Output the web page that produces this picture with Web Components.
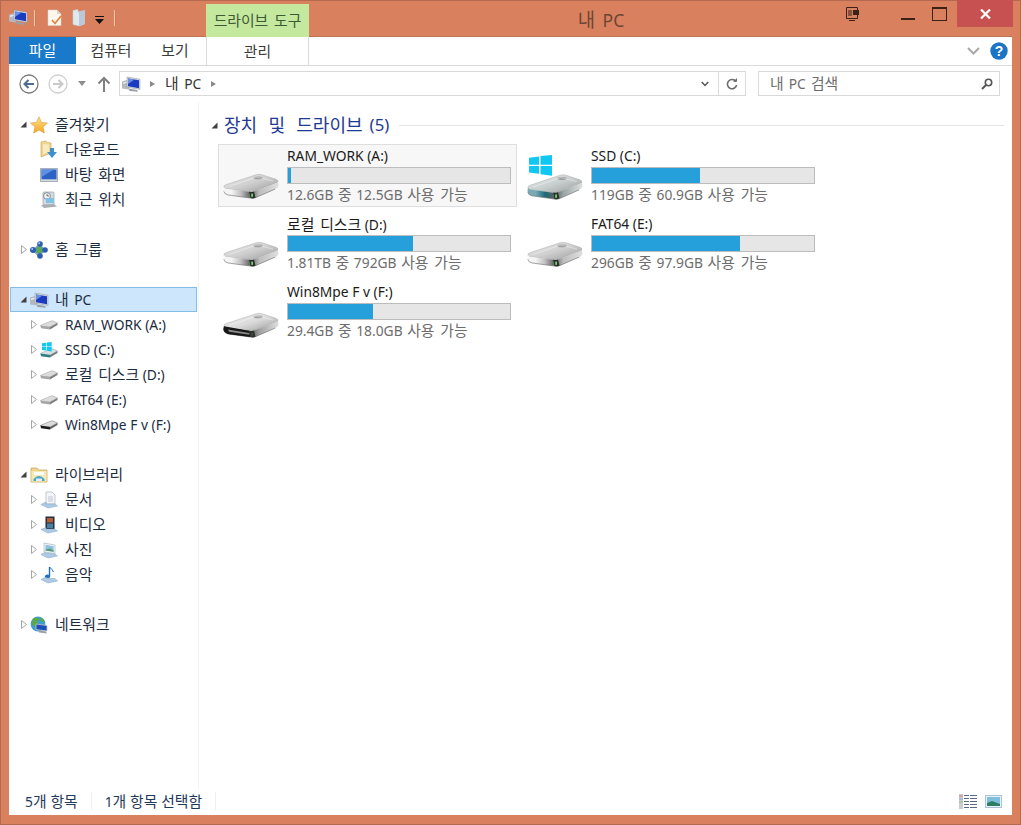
<!DOCTYPE html>
<html lang="ko"><head><meta charset="utf-8"><title>내 PC</title>
<style>
html,body{margin:0;padding:0;background:#d9815f}
body{font:13.8px "Noto Sans","Noto Sans CJK KR",sans-serif;color:#1e395b}
</style></head><body>
<x-window>
  <x-titlebar slot="title"></x-titlebar>
  <x-ribbon slot="ribbon"></x-ribbon>
  <x-addressbar slot="address"></x-addressbar>
  <x-nav slot="nav">
    <x-nav-item level="0" arrow="open" icon="star">즐겨찾기</x-nav-item>
    <x-nav-item level="1" icon="download">다운로드</x-nav-item>
    <x-nav-item level="1" icon="desktop">바탕 화면</x-nav-item>
    <x-nav-item level="1" icon="recent">최근 위치</x-nav-item>
    <x-nav-item spacer></x-nav-item>
    <x-nav-item level="0" arrow="closed" icon="homegroup">홈 그룹</x-nav-item>
    <x-nav-item spacer></x-nav-item>
    <x-nav-item level="0" arrow="open" icon="pc" selected>내 PC</x-nav-item>
    <x-nav-item level="1" arrow="closed" icon="drive-s">RAM_WORK (A:)</x-nav-item>
    <x-nav-item level="1" arrow="closed" icon="ssd-s">SSD (C:)</x-nav-item>
    <x-nav-item level="1" arrow="closed" icon="drive-s">로컬 디스크 (D:)</x-nav-item>
    <x-nav-item level="1" arrow="closed" icon="drive-s">FAT64 (E:)</x-nav-item>
    <x-nav-item level="1" arrow="closed" icon="usb-s">Win8Mpe F v (F:)</x-nav-item>
    <x-nav-item spacer></x-nav-item>
    <x-nav-item level="0" arrow="open" icon="library">라이브러리</x-nav-item>
    <x-nav-item level="1" arrow="closed" icon="doc">문서</x-nav-item>
    <x-nav-item level="1" arrow="closed" icon="video">비디오</x-nav-item>
    <x-nav-item level="1" arrow="closed" icon="picture">사진</x-nav-item>
    <x-nav-item level="1" arrow="closed" icon="music">음악</x-nav-item>
    <x-nav-item spacer></x-nav-item>
    <x-nav-item level="0" arrow="closed" icon="globe">네트워크</x-nav-item>
  </x-nav>
  <x-content slot="content">
    <x-group-header count="(5)">장치 및 드라이브</x-group-header>
    <x-drive-grid>
      <x-drive-tile selected icon="drive" name="RAM_WORK (A:)" fill="3" info="12.6GB 중 12.5GB 사용 가능"></x-drive-tile>
      <x-drive-tile icon="ssd" name="SSD (C:)" fill="108" info="119GB 중 60.9GB 사용 가능"></x-drive-tile>
      <x-drive-tile icon="drive" name="로컬 디스크 (D:)" fill="125" info="1.81TB 중 792GB 사용 가능"></x-drive-tile>
      <x-drive-tile icon="drive" name="FAT64 (E:)" fill="148" info="296GB 중 97.9GB 사용 가능"></x-drive-tile>
      <x-drive-tile icon="usb" name="Win8Mpe F v (F:)" fill="85" info="29.4GB 중 18.0GB 사용 가능"></x-drive-tile>
    </x-drive-grid>
  </x-content>
  <x-statusbar slot="status"></x-statusbar>
</x-window>
<script>
const driveBody=(lite,front,right,top,led)=>`
 <defs>
  <linearGradient id="dt" x1="0" y1="0" x2="1" y2="1"><stop offset="0" stop-color="#ececec"/><stop offset=".5" stop-color="${top}"/><stop offset="1" stop-color="#999"/></linearGradient>
  <linearGradient id="df" x1="0" y1="0" x2="1" y2="0"><stop offset="0" stop-color="${lite}"/><stop offset=".3" stop-color="${lite}"/><stop offset=".65" stop-color="${front}"/><stop offset="1" stop-color="#5f5f5f"/></linearGradient>
  <linearGradient id="dr" x1="0" y1="0" x2="1" y2="0"><stop offset="0" stop-color="#4f4f4f"/><stop offset=".35" stop-color="${right}"/><stop offset="1" stop-color="#e0e0e0"/></linearGradient>
 </defs>
 <path d="M1 15.5 Q0.5 14 3 13 L33 2 Q36 1 39 2 L53 7 Q56 8.5 54.5 10.5 L31 20.5 Q29 21.5 26 21 L3 17.5 Q1.5 17 1 15.5Z" fill="url(#dt)" stroke="#a8a8a8" stroke-width=".5"/>
 <path d="M1 15.5 Q1.5 17 3 17.5 L26 21 L27.5 28 L5 24.5 Q0.5 23 0.5 19Z" fill="url(#df)"/>
 <path d="M31 20.5 L54.5 10.5 Q56 12 55.5 14.5 Q55 16.5 52 18 L32.5 27.5 Q30 28.5 27.5 28 L26 21 Q29 21.5 31 20.5Z" fill="url(#dr)"/>
 <path d="M.8 20.5 Q1.5 23.8 5 24.5 L27.5 28 Q30 28.5 32.5 27.5 L52 18" fill="none" stroke="#6a6a6a" stroke-width=".8" opacity=".8"/>
 <path d="M26 21 Q29 21.5 31 20.5 L32.5 27.5 Q30 28.5 27.5 28Z" fill="#2c3129"/>
 <rect x="28.2" y="23" width="1.8" height="3.6" fill="${led}"/>
 <ellipse cx="35" cy="5.5" rx="4.5" ry="1.6" fill="#8c8c8c" opacity=".75"/>
 <path d="M6 15 L34 4.5 L50 9" fill="none" stroke="#fff" stroke-width=".8" opacity=".5"/>`;
const win=(x,y,s)=>`<g transform="translate(${x} ${y}) scale(${s})" fill="#12c7f4">
 <path d="M0 3 L10 1.5 V10.5 H0Z"/><path d="M11.5 1.2 L23 0 V10.5 H11.5Z"/><path d="M0 12 H10 V20.5 L0 19Z"/><path d="M11.5 12 H23 V22.5 L11.5 21Z"/></g>`;
const pc=`<path d="M0 5.5 L7 3.5 V13.5 L0 12.5Z" fill="#b4b9c0"/><path d="M1 6.5 L5 5.5 V7 L1 8Z" fill="#e6e8eb"/><path d="M5 1 L18 3.2 V13.4 L5 11.2Z" fill="#d6dade" stroke="#8d959f" stroke-width=".5"/><path d="M6 2.4 L17 4.2 V12.2 L6 10.2Z" fill="#1a3cc2"/><path d="M6 2.4 L12.5 3.5 L6 8Z" fill="#6a90e4"/><path d="M6.5 12.6 L15 14 L16 15.8 L7.5 15Z" fill="#9aa0a6"/>`;
const ICONS={
 drive:{vb:"0 0 56 29",w:56,h:26,s:driveBody("#f4f4f4","#bfbfbf","#bdbdbd","#cfcfcf","#6fd06f")},
 ssd:{vb:"0 0 56 49",w:56,h:45,s:`<g transform="translate(0 20)">${driveBody("#79aab3","#1c6a7a","#9aa5a6","#c8cfcf","#6fd06f")}</g>`+win(2,0,1)},
 usb:{vb:"0 0 56 29",w:56,h:26,s:driveBody("#333","#1c1c1c","#a0a0a0","#dcdcdc","#444")+`<path d="M1 16 L26 21 L27.5 28 L5 24.5 Q0.5 23 0.5 19Z" fill="#171717"/><path d="M5 19.5 L26 23.4 L26.4 25.4 L6 22Z" fill="#8a8a8a"/>`},
 "drive-s":{vb:"0 0 18 10",w:18,h:10,s:`<path d="M.5 5.4 L11 1 Q12 .7 13 1 L17.5 3 L10 7 L1 6.4Z" fill="#dcdcdc" stroke="#9a9a9a" stroke-width=".5"/><path d="M.5 5.4 L10 7 V9.5 L1 8.2Z" fill="#a6a6a6"/><path d="M10 7 L17.5 3 V5 L10 9.5Z" fill="#7f7f7f"/>`},
 "ssd-s":{vb:"0 0 18 16",w:18,h:16,s:`<g transform="translate(0 6)"><path d="M.5 5.4 L11 1 Q12 .7 13 1 L17.5 3 L10 7 L1 6.4Z" fill="#d9dede" stroke="#8a9a9a" stroke-width=".5"/><path d="M.5 5.4 L10 7 V9.5 L1 8.2Z" fill="#2d7d88"/><path d="M10 7 L17.5 3 V5 L10 9.5Z" fill="#6f8080"/></g>`+win(2,0,.42)},
 "usb-s":{vb:"0 0 18 10",w:18,h:10,s:`<path d="M.5 5.4 L11 1 Q12 .7 13 1 L17.5 3 L10 7 L1 6.4Z" fill="#dcdcdc" stroke="#777" stroke-width=".5"/><path d="M.5 5.4 L10 7 V9.5 L1 8.2Z" fill="#1b1b1b"/><path d="M10 7 L17.5 3 V5 L10 9.5Z" fill="#666"/>`},
 pc:{vb:"0 0 18 16",w:18,h:16,s:pc},
 star:{vb:"0 0 18 18",w:18,h:18,s:`<defs><linearGradient id="g" x1="0" y1="0" x2="0" y2="1"><stop offset="0" stop-color="#ffe18a"/><stop offset="1" stop-color="#f5a623"/></linearGradient></defs><path d="M9 .8 L11.5 6.4 L17.5 7 L13 11 L14.4 17 L9 14 L3.6 17 L5 11 L.5 7 L6.5 6.4Z" fill="url(#g)" stroke="#d59a3b" stroke-width=".6"/>`},
 download:{vb:"0 0 18 18",w:18,h:18,s:`<path d="M1 1 L6 0 Q6.5 2 11 2 V12 L1 16Z" fill="#f0d68a" stroke="#c3a257" stroke-width=".6"/><path d="M3 3 V13 L9 11 V3.5Z" fill="#f8ebc0"/><path d="M10 7 H14 V11 H17 L12 17 L7 11 H10Z" fill="#3d8fcf"/>`},
 desktop:{vb:"0 0 18 14",w:18,h:14,s:`<rect x=".5" y=".5" width="17" height="13" fill="#d2d8e0" stroke="#a8b1bd"/><rect x="1.5" y="1.5" width="15" height="9.8" fill="#2c62c4"/><path d="M1.5 1.5 H14 L1.5 9Z" fill="#5f8fe0"/>`},
 recent:{vb:"0 0 18 18",w:18,h:18,s:`<rect x="3" y="1" width="11" height="13" rx="1" fill="#d5dbe0" stroke="#8f979f" stroke-width=".6"/><circle cx="7" cy="5" r="3.4" fill="#f2f5f7" stroke="#6d7780" stroke-width=".8"/><path d="M7 3 V5 H9" fill="none" stroke="#444" stroke-width=".7"/><rect x="6" y="7" width="8" height="5" fill="#7ec3e6"/><path d="M1 14 L14 13 L17 15.5 L4 17Z" fill="#a8aeb3"/>`},
 homegroup:{vb:"0 0 18 18",w:18,h:18,s:`<circle cx="9" cy="9" r="4" fill="#59a85b"/><path d="M9 3 L3 10 L9 15 L15 9Z" fill="none" stroke="#7ca0c7" stroke-width="1.2"/><circle cx="10" cy="3" r="2.8" fill="#2b5fae"/><circle cx="3" cy="9" r="3" fill="#2b5fae"/><circle cx="15" cy="9" r="2.8" fill="#2b5fae"/><circle cx="10" cy="15" r="2.8" fill="#2b5fae"/><circle cx="9.2" cy="2.2" r="1" fill="#a8c8f0"/><circle cx="2.2" cy="8" r="1" fill="#a8c8f0"/>`},
 library:{vb:"0 0 18 18",w:18,h:18,s:`<path d="M1 4 V2 H7 L8.5 4 H17 V16 H1Z" fill="#f0d68a" stroke="#c3a257" stroke-width=".7"/><rect x="1.5" y="5" width="15" height="10.5" fill="#f8e9b4"/><rect x="4" y="6" width="10" height="3" fill="#fff"/><path d="M3.5 13 Q9 7 14.5 13 V15 H3.5Z" fill="#4aa7c9"/><rect x="6" y="12.5" width="6" height="2.5" fill="#e4eef4"/>`},
 doc:{vb:"0 0 18 18",w:18,h:18,s:`<path d="M6 1 H12 L15 4 V13 H6Z" fill="#f4f6f9" stroke="#a9b4c2" stroke-width=".7"/><path d="M8 6 H13 M8 8 H13 M8 10 H13" stroke="#aab6c6" stroke-width=".7"/><path d="M1 13.5 L6 11 V13 H15 L17.5 15 L8 17 Z" fill="#aecbe6" stroke="#7ba2c9" stroke-width=".5"/>`},
 video:{vb:"0 0 18 18",w:18,h:18,s:`<rect x="5.5" y="0.5" width="9" height="13" fill="#233242"/><rect x="7" y="2" width="6" height="4.5" fill="#b85c33"/><rect x="7" y="7.5" width="6" height="4.5" fill="#4a7fa0"/><path d="M5.5 1 V13 M14.5 1 V13" stroke="#889" stroke-dasharray="1 1"/><path d="M1 13.5 L6 11.5 V13 H14.5 L17.5 15 L8 17Z" fill="#aecbe6" stroke="#7ba2c9" stroke-width=".5"/>`},
 picture:{vb:"0 0 18 18",w:18,h:18,s:`<path d="M4 2 L15 4 V12.5 L4 11Z" fill="#eef3f7" stroke="#9fb0c0" stroke-width=".6"/><path d="M5.5 3.8 L13.6 5.2 V10.8 L5.5 9.6Z" fill="#8fc1de"/><path d="M5.5 8.5 L10 7.5 L13.6 9.5 V10.8 L5.5 9.6Z" fill="#5a9a6d"/><path d="M1 13.5 L5 11.5 V12 L15 13 L17.5 15 L8 17Z" fill="#aecbe6" stroke="#7ba2c9" stroke-width=".5"/>`},
 music:{vb:"0 0 18 18",w:18,h:18,s:`<path d="M9.5 1 V10" stroke="#1c6fc0" stroke-width="1.4" fill="none"/><path d="M9.5 1 Q12 3 13.5 6" stroke="#1c6fc0" stroke-width="1" fill="none"/><ellipse cx="7.5" cy="10.5" rx="2.6" ry="2" fill="#1c6fc0"/><path d="M1 13.5 L5 11.5 L10 12.5 H15 L17.5 15 L8 17Z" fill="#aecbe6" stroke="#7ba2c9" stroke-width=".5"/>`},
 globe:{vb:"0 0 18 18",w:18,h:18,s:`<circle cx="8" cy="8" r="7.4" fill="#3f9ecb"/><path d="M3 2.5 Q7 1 9 3 L7 6 L8 9 L5 11 L2 8Z M10 1.5 Q14 2.5 15 6 L11 5Z" fill="#5da83f"/><path d="M6 8 L17 9.5 V15 L6 13.5Z" fill="#1c4db8" stroke="#c2c8d0" stroke-width=".8"/><path d="M8 14 L16 15.5 L17 17.5 L9 16.5Z" fill="#9aa1a8"/>`},
 doccheck:{vb:"0 0 16 18",w:16,h:18,s:`<path d="M1 1 H10 L14 5 V16.5 H1Z" fill="#fbf7ef" stroke="#d9d2c4" stroke-width=".5"/><path d="M10 1 V5 H14Z" fill="#dcd6c8"/><path d="M5 11 L8 14.5 L14 7" fill="none" stroke="#e2853c" stroke-width="1.7"/>`},
 folderq:{vb:"0 0 14 18",w:14,h:18,s:`<path d="M1 1.5 L6 .5 V3 L12.5 1.5 V15 L7 17 L1 15.5Z" fill="#dfe7ef" stroke="#c4cfdb" stroke-width=".5"/><path d="M7 3 L12.5 1.5 V15 L7 17Z" fill="#b9c9da"/>`}
};
class XIcon extends HTMLElement{
 static get observedAttributes(){return["name"]}
 constructor(){super();this.attachShadow({mode:"open"})}
 connectedCallback(){this.render()}
 attributeChangedCallback(){this.render()}
 render(){const i=ICONS[this.getAttribute("name")];if(!i)return;
  this.shadowRoot.innerHTML=`<style>:host{display:inline-flex;flex:none;line-height:0}svg{display:block;overflow:visible}</style><svg xmlns="http://www.w3.org/2000/svg" width="${i.w}" height="${i.h}" viewBox="${i.vb}" preserveAspectRatio="none">${i.s}</svg>`;}
}
customElements.define("x-icon",XIcon);

function tpl(html){const t=document.createElement("template");t.innerHTML=html;return t}
function comp(name,html,extra){
 const t=tpl(html);
 customElements.define(name,class extends HTMLElement{
  constructor(){super();this.attachShadow({mode:"open"}).appendChild(t.content.cloneNode(true))}
  connectedCallback(){extra&&extra.call(this,this.shadowRoot)}
 });
}
comp("x-window",`<style>
:host{display:flex;flex-direction:column;box-sizing:border-box;width:1021px;height:825px;border:1px solid #b56a50;background:#d9815f}
.main{flex:1;display:flex;flex-direction:column;margin:0 8px 9px 8px;background:#fff;min-height:0;box-shadow:0 -1px 0 #bd7156}
.body{flex:1;display:flex;min-height:0}
</style>
<slot name="title"></slot>
<div class="main"><slot name="ribbon"></slot><slot name="address"></slot>
<div class="body"><slot name="nav"></slot><slot name="content"></slot></div>
<slot name="status"></slot></div>`);

comp("x-titlebar",`<style>
:host{display:flex;height:36px;flex:none;position:relative}
.qa{display:flex;align-items:flex-start;width:205px;padding:8px 0 0 8px;box-sizing:border-box;flex:none}
.sep{width:1px;height:16px;background:#f3c9a9;box-shadow:1px 0 0 #c9785a;margin-top:1px}
.ctx{flex:none;width:103px;height:33px;margin-top:3px;background:#c4e89e;color:#3d5a35;box-sizing:border-box;padding-top:7px;text-align:center;line-height:18px}
.title{flex:none;width:584px;text-align:center;padding-top:9px;font-size:17.5px;line-height:20px;color:#6e4535;--hws:4px;word-spacing:3px}
.ctrl{flex:1;display:flex;position:relative;margin-left:-92px}
.snap{position:absolute;left:45px;top:6px}
.min{position:absolute;left:100px;top:17px;width:14px;height:2px;background:#3a2218}
.max{position:absolute;left:131px;top:6px;width:13px;height:11px;border:1px solid #3a2218;border-top-width:2px}
.close{position:absolute;left:156px;top:-1px;width:56px;height:27px;background:#c75050;color:#fff;display:flex;align-items:center;justify-content:center}
.caret{margin:7px 0 0 9px}
</style>
<div class="qa">
 <x-icon name="pc"></x-icon><span class="sep" style="margin-left:7px;margin-right:12px"></span>
 <x-icon name="doccheck"></x-icon><x-icon name="folderq" style="margin-left:9px"></x-icon>
 <svg class="caret" width="9" height="9" viewBox="0 0 9 9"><path d="M0 0H9V1H0Z M0 3H9L4.5 8Z" fill="#111"/></svg>
 <span class="sep" style="margin-left:10px"></span>
</div>
<div class="ctx">드라이브 도구</div>
<div class="title">내 PC</div>
<div class="ctrl">
 <svg class="snap" width="13" height="14" viewBox="0 0 13 14"><path d="M.5.5H11.5V11.5H.5Z M3.5 11.5H8.5M3 13.5H9" fill="none" stroke="#3a2218"/><path d="M3 3V9M5 3V9" stroke="#3a2218"/><rect x="7" y="3" width="6" height="5" fill="#3a2218"/></svg>
 <span class="min"></span><span class="max"></span>
 <span class="close"><svg width="11" height="10" viewBox="0 0 11 10"><path d="M1 .5L10 9.5M10 .5L1 9.5" stroke="#fff" stroke-width="2.2"/></svg></span>
</div>`);

comp("x-ribbon",`<style>
:host{display:flex;height:29px;flex:none;box-sizing:border-box;border-bottom:1px solid #dadbdc;color:#3b3b3b;align-items:stretch}
.tab{display:flex;align-items:center;justify-content:center;box-sizing:border-box;height:27px;line-height:1}
.file{width:67px;background:#1979ca;color:#fff}
.mgr{width:103px;height:28px;border:solid #dadbdc;border-width:0 1px;margin-left:2px}
.end{margin-left:auto;display:flex;align-items:center;gap:10px;padding-right:4px}
</style>
<span class="tab file">파일</span><span class="tab" style="width:70px">컴퓨터</span><span class="tab" style="width:58px">보기</span><span class="tab mgr">관리</span>
<span class="end"><svg width="13" height="8" viewBox="0 0 13 8"><path d="M1 1L6.5 6.5L12 1" fill="none" stroke="#a9a9a9" stroke-width="2"/></svg>
<svg width="18" height="18" viewBox="0 0 18 18"><circle cx="9" cy="9" r="8.7" fill="#1b75c4"/><text x="9" y="14.2" text-anchor="middle" font-family="Liberation Sans" font-weight="700" font-size="14" fill="#fff">?</text></svg></span>`);

comp("x-addressbar",`<style>
:host{display:flex;height:36px;flex:none;box-sizing:border-box;padding:5px 12px 6px 10px;color:#333;align-items:stretch}
.nav{width:100px;flex:none;display:flex;align-items:center;}
.box{display:flex;align-items:center;box-sizing:border-box;height:25px;border:1px solid #d9d9d9;background:#fff;line-height:1}
.addr{width:627px;flex:none}
.crumb{margin:0 10px 0 10px;word-spacing:2px}
.tri{width:0;height:0;border:3.5px solid transparent;border-left:5px solid #8a8a8a;border-right:0}
.dd{margin-left:auto;width:26px;height:100%;display:flex;align-items:center;justify-content:center}
.ref{width:26px;height:100%;border-left:1px solid #d9d9d9;display:flex;align-items:center;justify-content:center}
.search{width:242px;margin-left:12px;padding:0 6px 0 11px;color:#6d6d6d;justify-content:space-between;flex:none;word-spacing:1.5px}
</style>
<div class="nav">
 <svg width="20" height="20" viewBox="0 0 20 20"><circle cx="10" cy="10" r="9" fill="none" stroke="#7a7a7a" stroke-width="1.3"/><path d="M15 10H6M9.5 6L5.5 10L9.5 14" fill="none" stroke="#4e6d94" stroke-width="2"/></svg>
 <svg style="margin-left:9px" width="20" height="20" viewBox="0 0 20 20"><circle cx="10" cy="10" r="9" fill="none" stroke="#cfcfcf" stroke-width="1.3"/><path d="M5 10H14M10.5 6L14.5 10L10.5 14" fill="none" stroke="#c9c9c9" stroke-width="2"/></svg>
 <svg style="margin-left:10px" width="8" height="5" viewBox="0 0 8 5"><path d="M0 0H8L4 5Z" fill="#8e8e8e"/></svg>
 <svg style="margin-left:11px" width="14" height="16" viewBox="0 0 14 16"><path d="M7 16V2M1.5 7.5L7 2L12.5 7.5" fill="none" stroke="#7f7f7f" stroke-width="2"/></svg>
</div>
<div class="box addr">
 <x-icon name="pc" style="margin-left:2px"></x-icon><span class="tri" style="margin-left:10px"></span><span class="crumb">내 PC</span><span class="tri"></span>
 <span class="dd"><svg width="8" height="6" viewBox="0 0 8 6"><path d="M.7 1L4 4.5L7.3 1" fill="none" stroke="#555" stroke-width="1.5"/></svg></span>
 <span class="ref"><svg width="12" height="12" viewBox="0 0 12 12"><path d="M9.8 3.5A4.6 4.6 0 1 0 10.6 7" fill="none" stroke="#6b6b6b" stroke-width="1.5"/><path d="M7 3.8H11V0Z" fill="#6b6b6b"/></svg></span>
</div>
<div class="box search"><span>내 PC 검색</span><svg width="12" height="12" viewBox="0 0 12 12"><circle cx="7.5" cy="4.5" r="3.2" fill="none" stroke="#555" stroke-width="1.6"/><path d="M5 7L1 11" stroke="#555" stroke-width="2"/></svg></div>`);

comp("x-nav",`<style>
:host{display:block;width:190px;flex:none;box-sizing:border-box;padding-top:10px;border-right:1px solid #f2f2f2;overflow:hidden}
</style><slot></slot>`);

customElements.define("x-nav-item",class extends HTMLElement{
 constructor(){super();const s=this.attachShadow({mode:"open"});
  s.innerHTML=`<style>
  :host{display:flex;align-items:center;height:25px;box-sizing:border-box;color:#1c2c3f;line-height:1;white-space:nowrap}
  :host([selected]){background:#cde6fb;border:1px solid #84bde8;margin-left:1px;width:187px;word-spacing:2px}
  .arrow{width:9px;flex:none;display:flex;justify-content:center;margin-right:2px}
  .label{margin-left:7px}
  .ic{width:18px;display:flex;justify-content:center;align-items:center;flex:none}
  </style><span class="arrow"></span><span class="ic"></span><span class="label"><slot></slot></span>`;}
 connectedCallback(){
  const s=this.shadowRoot,lvl=this.getAttribute("level"),a=this.getAttribute("arrow"),ic=this.getAttribute("icon");
  if(this.hasAttribute("spacer")){return}
  const sel=this.hasAttribute("selected");
  this.style.paddingLeft=(lvl==="1"?20:(sel?8:10))+"px";
  const ar=s.querySelector(".arrow");
  if(a==="open")ar.innerHTML=`<svg width="7" height="7" viewBox="0 0 7 7"><path d="M6.5 .5V6.5H.5Z" fill="#404040"/></svg>`;
  if(a==="closed")ar.innerHTML=`<svg width="6" height="9" viewBox="0 0 6 9"><path d="M.5 .5L5.5 4.5L.5 8.5Z" fill="#fff" stroke="#a6a6a6"/></svg>`;
  s.querySelector(".ic").innerHTML=`<x-icon name="${ic}"></x-icon>`;
 }
});

comp("x-content",`<style>:host{display:block;flex:1;box-sizing:border-box;padding:9px 8px 0 12px;min-width:0}</style><slot></slot>`);

customElements.define("x-group-header",class extends HTMLElement{
 constructor(){super();this.attachShadow({mode:"open"}).innerHTML=`<style>
 :host{display:flex;align-items:center;height:28px;color:#1f3a93;font-size:16.8px;line-height:1;white-space:nowrap;--hws:6.5px}
 .tri{margin-right:6px}.c{margin-left:7px}.line{flex:1;height:1px;background:#e5e5e5;margin-left:10px}
 </style><svg class="tri" width="7" height="7" viewBox="0 0 7 7"><path d="M6.5 .5V6.5H.5Z" fill="#404040"/></svg><slot></slot><span class="c"></span><span class="line"></span>`}
 connectedCallback(){this.shadowRoot.querySelector(".c").textContent=this.getAttribute("count")}
});
comp("x-drive-grid",`<style>:host{display:grid;grid-template-columns:304px 304px;grid-auto-rows:68px;margin:5px 0 0 7px}</style><slot></slot>`);

customElements.define("x-drive-tile",class extends HTMLElement{
 constructor(){super();this.attachShadow({mode:"open"}).innerHTML=`<style>
 :host{display:flex;box-sizing:border-box;width:299px;height:63px;border:1px solid transparent;white-space:nowrap}
 :host([selected]){background:#f7f7f7;border-color:#dedede}
 .ic{width:68px;flex:none;position:relative}
 x-icon{position:absolute;left:4px}
 .t{width:224px;display:flex;flex-direction:column}
 .n{line-height:18px;height:22px;color:#1a1a1a;padding-top:2px;box-sizing:border-box}
 .b{box-sizing:border-box;width:224px;height:17px;background:#e6e6e6;border:1px solid #bcbcbc;}
 .f{height:100%;background:#26a0da}
 .i{line-height:18px;margin-top:1px;color:#6d6d6d;word-spacing:1px}
 </style><div class="ic"><x-icon></x-icon></div><div class="t"><div class="n"></div><div class="b"><div class="f"></div></div><div class="i"></div></div>`}
 connectedCallback(){const s=this.shadowRoot,ic=this.getAttribute("icon"),x=s.querySelector("x-icon");
  x.setAttribute("name",ic);
  x.style.top={drive:"28px",ssd:"10px",usb:"31px"}[ic];
  s.querySelector(".n").textContent=this.getAttribute("name");
  s.querySelector(".f").style.width=this.getAttribute("fill")+"px";
  s.querySelector(".i").textContent=this.getAttribute("info");}
});

comp("x-statusbar",`<style>
:host{display:flex;align-items:center;height:26px;box-sizing:border-box;padding-bottom:2px;flex:none;color:#1e395b;padding-left:16px;position:relative;line-height:1;--hws:0px}
.s{width:1px;height:18px;background:#f0f0f0;margin:0 13px}
.v{margin-left:auto;display:flex;gap:8px;margin-right:10px;align-items:center}
</style>
<span>5개 항목</span><span class="s"></span><span>1개 항목 선택함</span><span class="s"></span>
<span class="v">
<svg width="18" height="15" viewBox="0 0 18 15"><rect x="0" y="0" width="4" height="15" fill="#c9cdd0"/><path d="M0 2H4" stroke="#d97a7a"/><path d="M0 5H4" stroke="#8fa8d9"/><path d="M0 8H4" stroke="#8fbf7f"/><path d="M5 1.5H10M11 1.5H18M5 4.5H10M11 4.5H18M5 7.5H10M11 7.5H18M5 10.5H10M11 10.5H18M5 13.5H10M11 13.5H18" stroke="#5a6a85"/></svg>
<svg width="17" height="13" viewBox="0 0 17 13"><rect x=".5" y=".5" width="16" height="12" fill="#e8f2f8" stroke="#a9c3d6"/><rect x="2" y="2" width="13" height="9" fill="#7ec0dc"/><path d="M2 8L7 6L15 9V11H2Z" fill="#2e7f62"/></svg>
</span>`);

/* Hangul in the reference runs a little wider than the Latin beside it */
function scaleHangul(root){
 const re=/[\uAC00-\uD7A3]+(?: [\uAC00-\uD7A3]+)*/g;
 [...root.childNodes].forEach(n=>{
  if(n.nodeType===3){
   const v=n.nodeValue;if(!/[\uAC00-\uD7A3]/.test(v))return;
   const f=document.createDocumentFragment();let i=0;
   v.replace(re,(m,p)=>{f.append(v.slice(i,p));const e=document.createElement("span");e.style.fontSize="1.075em";e.style.wordSpacing="var(--hws,2px)";e.textContent=m;f.append(e);i=p+m.length;return m});
   f.append(v.slice(i));n.replaceWith(f);
  }else if(n.nodeType===1&&n.tagName!=="STYLE"&&n.tagName!=="SCRIPT"&&n.tagName!=="TEMPLATE"){
   if(n.shadowRoot)scaleHangul(n.shadowRoot);
   scaleHangul(n);
  }
 });
}
scaleHangul(document.body);
</script>
</body></html>
